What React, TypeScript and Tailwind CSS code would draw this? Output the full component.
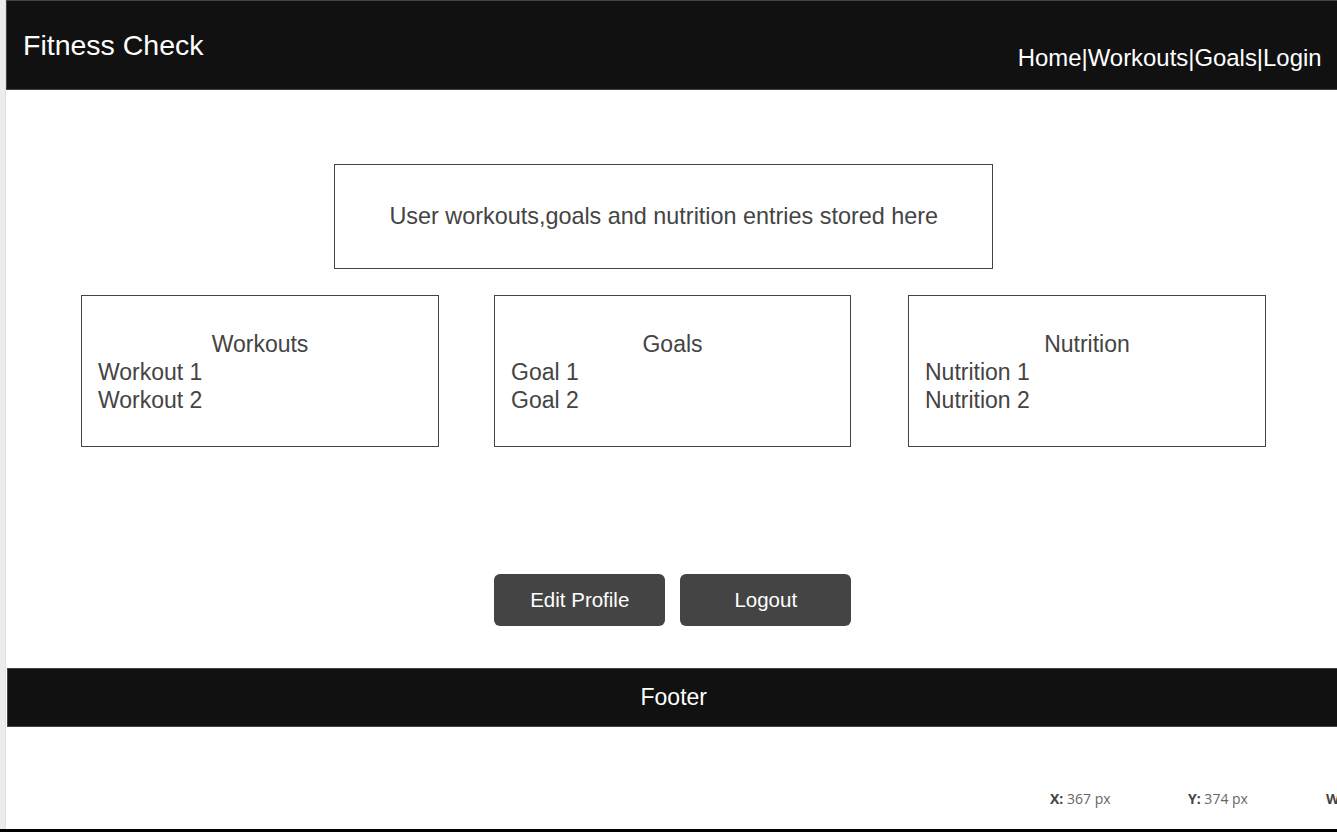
import React from "react";

// 카드 데이터
type Card = {
  title: string;
  items: string[];
  className: string;
};

const cards: Card[] = [
  { title: "Workouts", items: ["Workout 1", "Workout 2"], className: "ml-[75px] w-[358px]" },
  { title: "Goals", items: ["Goal 1", "Goal 2"], className: "ml-[55px] w-[357px]" },
  { title: "Nutrition", items: ["Nutrition 1", "Nutrition 2"], className: "ml-[57px] w-[358px]" },
];

function App() {
  return (
    <div
      className="flex h-[832px] w-full flex-col overflow-hidden bg-white"
      style={{ fontFamily: '"Liberation Sans", Arial, sans-serif' }}
    >
      <div className="flex h-[829px] shrink-0">
        {/* left strip */}
        <div className="w-[6px] shrink-0 bg-[#ececec] border-r border-[#e0e0e0]" />

        <div className="flex flex-1 flex-col">
          {/* header */}
          <header className="flex h-[90px] shrink-0 justify-between border border-r-0 border-[#444] bg-[#111] text-white">
            <h1 className="pl-[16px] pt-[28px] text-[28.5px] leading-[33px]">Fitness Check</h1>
            <nav className="pr-[18px] pt-[43px] text-[23.9px] leading-[28px]">
              <span>Home</span>|<span>Workouts</span>|<span>Goals</span>|<span>Login</span>
            </nav>
          </header>

          {/* content */}
          <main className="flex h-[578px] shrink-0 flex-col text-[#444]">
            <div className="mt-[74px] flex justify-center pr-[18px]">
              <div className="flex h-[105px] w-[659px] items-center justify-center border border-[#444] text-[23.4px]">
                User workouts,goals and nutrition entries stored here
              </div>
            </div>

            <div className="mt-[26px] flex">
              {cards.map((card) => (
                <div
                  key={card.title}
                  className={`h-[152px] border border-[#444] px-[16px] pt-[34px] text-[23px] leading-[28px] ${card.className}`}
                >
                  <div className="text-center">{card.title}</div>
                  {card.items.map((item) => (
                    <div key={item}>{item}</div>
                  ))}
                </div>
              ))}
            </div>

            <div className="mt-[127px] flex justify-center gap-[15px]">
              <button className="h-[52px] w-[171px] rounded-[6px] bg-[#444] text-[20.5px] text-white">
                Edit Profile
              </button>
              <button className="h-[52px] w-[171px] rounded-[6px] bg-[#444] text-[20.5px] text-white">
                Logout
              </button>
            </div>
          </main>

          {/* footer */}
          <footer className="ml-[1px] flex h-[59px] shrink-0 items-center justify-center border border-r-0 border-[#444] bg-[#111] text-[23px] text-white">
            Footer
          </footer>

          {/* coords */}
          <div
            className="flex h-[102px] shrink-0 items-center pl-[1044px] pt-[40px] text-[14px] text-[#666]"
            style={{ fontFamily: '"Open Sans", sans-serif' }}
          >
            <span className="w-[138px] whitespace-nowrap">
              <b className="text-[#444]">X:</b> 367 px
            </span>
            <span className="w-[138px] whitespace-nowrap">
              <b className="text-[#444]">Y:</b> 374 px
            </span>
            <span className="whitespace-nowrap">
              <b className="text-[#444]">W</b>
            </span>
          </div>
        </div>
      </div>

      {/* bottom edge */}
      <div className="h-[3px] shrink-0 bg-black" />
    </div>
  );
}

export default App;
